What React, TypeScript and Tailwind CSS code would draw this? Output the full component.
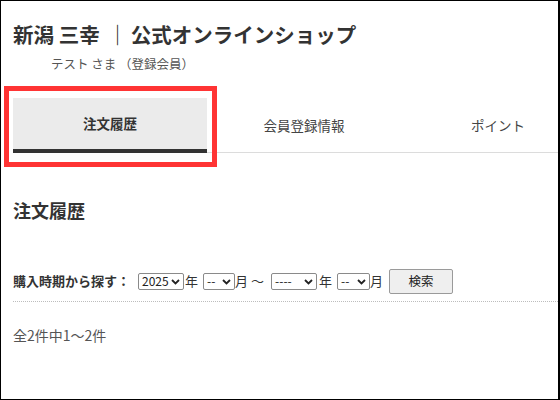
import React from 'react'

const font = { fontFamily: '"Noto Sans CJK JP", "Noto Sans", sans-serif' }

function Select({ value, width }: { value: string; width: string }) {
  return (
    <span
      className={`relative inline-flex items-center h-[17px] ${width} border border-[#8a8a8a] rounded-[2px] bg-white pl-[3px] text-[12px] leading-none text-[#222]`}
    >
      {value}
      <svg
        className="absolute right-[3px] top-[5px] w-[9px] h-[6px]"
        viewBox="0 0 9 6"
        fill="none"
        stroke="#222"
        strokeWidth={1.8}
      >
        <path d="M1 1l3.5 3.5L8 1" />
      </svg>
    </span>
  )
}

export default function App() {
  const tabs = ['注文履歴', '会員登録情報', 'ポイント']

  return (
    <div
      className="relative w-[560px] h-[400px] overflow-hidden bg-white border border-black border-r-2 text-[#333]"
      style={font}
    >
      {/* ヘッダー */}
      <div className="pl-[12px] pt-[23px]">
        <h1 className="text-[20.5px] font-bold leading-[20px] text-[#333] whitespace-nowrap">
          新潟 三幸 <span className="mx-[3px]">｜</span>公式オンラインショップ
        </h1>
        <p className="mt-[14px] ml-[38px] text-[12.5px] leading-[12px] text-[#555] whitespace-nowrap">
          テスト さま （登録会員）
        </p>
      </div>

      {/* タブ */}
      <div className="pl-[12px] mt-[28px]">
        <div className="flex h-[55px] border-b border-[#dcdcdc]">
          {tabs.map((t, i) => (
            <div
              key={t}
              className={
                i === 0
                  ? 'flex-none w-[194px] h-[55px] -mb-px flex items-center justify-center bg-[#ebebeb] border-b-4 border-[#333] text-[13.5px] font-bold text-[#333]'
                  : 'flex-none w-[194px] flex items-center justify-center text-[13.5px] text-[#444]'
              }
            >
              {t}
            </div>
          ))}
        </div>
      </div>

      {/* 注文履歴 */}
      <div className="pl-[12px]">
        <h2 className="mt-[48px] text-[18px] font-bold leading-[18px] text-[#333]">注文履歴</h2>

        <div className="mt-[49px] flex items-center h-[26px] text-[13px] text-[#333] whitespace-nowrap">
          <span className="font-bold text-[13px] text-[#333]">購入時期から探す：</span>
          <span className="ml-[8px]">
            <Select value="2025" width="w-[46px]" />
          </span>
          <span className="ml-[1px]">年</span>
          <span className="ml-[5px]">
            <Select value="--" width="w-[32px]" />
          </span>
          <span>月</span>
          <span className="ml-[3px] mr-[7px]">～</span>
          <Select value="----" width="w-[46px]" />
          <span className="ml-[2px]">年</span>
          <span className="ml-[5px]">
            <Select value="--" width="w-[33px]" />
          </span>
          <span>月</span>
          <button className="ml-[6px] w-[64px] h-[25px] bg-[#efefef] border border-[#9a9a9a] rounded-[2px] text-[12.5px] text-[#222]">
            検索
          </button>
        </div>

        <div className="mt-[7px] border-t border-dotted border-[#bdbdbd]" />

        <p className="mt-[26px] text-[14px] leading-[14px] text-[#555]">全2件中1～2件</p>
      </div>

      {/* 強調枠 */}
      <div className="absolute left-[3px] top-[85px] w-[213px] h-[81px] border-[5px] border-[#ff3434]" />
    </div>
  )
}
